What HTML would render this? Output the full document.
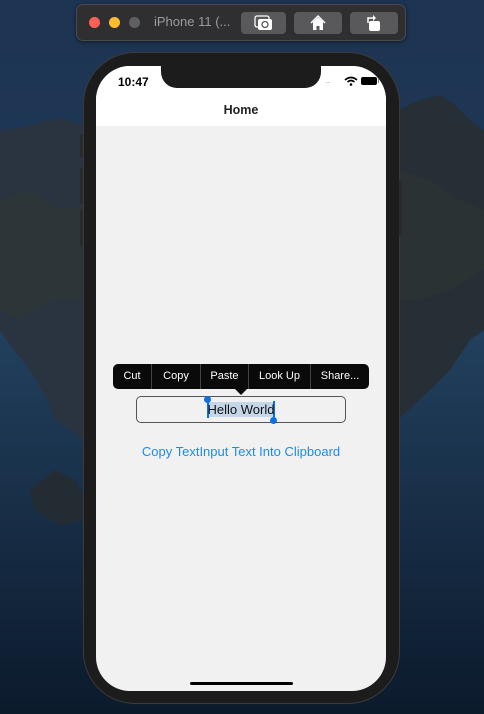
<!DOCTYPE html>
<html><head><meta charset="utf-8"><style>
*{margin:0;padding:0;box-sizing:border-box}
body{width:484px;height:714px;overflow:hidden;position:relative;font-family:"Liberation Sans",sans-serif;background:#1a2c44}
.abs{position:absolute}
</style></head><body>
<svg class="abs" style="left:0;top:0" width="484" height="714">
<defs><linearGradient id="sky" x1="0" y1="0" x2="0" y2="1"><stop offset="0" stop-color="#1d3452"/><stop offset="0.5" stop-color="#1f3a5a"/><stop offset="1" stop-color="#0f1f33"/></linearGradient>
<linearGradient id="sea" x1="0" y1="0" x2="0" y2="1"><stop offset="0" stop-color="#22405e"/><stop offset="1" stop-color="#0c1a2c"/></linearGradient></defs>
<rect width="484" height="714" fill="url(#sky)"/>
<rect y="330" width="484" height="384" fill="url(#sea)"/>
<polygon fill="#2a3340" points="0,130 20,128 40,122 60,118 85,125 85,440 70,430 55,420 45,395 30,370 10,345 0,330"/>
<polygon fill="#2e3836" opacity="0.7" points="0,200 30,190 60,210 85,205 85,300 50,300 20,320 0,310"/>
<polygon fill="#232b33" points="30,490 55,470 75,480 85,500 85,520 60,525 35,510"/>
<polygon fill="#262e36" points="398,110 420,100 440,95 455,105 470,120 484,130 484,330 470,340 450,370 430,390 398,420"/>
<polygon fill="#2c3433" opacity="0.7" points="398,170 430,180 460,200 484,210 484,270 450,290 420,300 398,300"/>
</svg>
<div class="abs" style="left:76px;top:4px;width:330px;height:37px;background:#2f2f31;border:1px solid #4a4a4c;border-radius:7px;box-shadow:0 1px 4px rgba(0,0,0,.5)"></div>
<div class="abs" style="left:89px;top:17px;width:11px;height:11px;border-radius:50%;background:#fe5f57"></div>
<div class="abs" style="left:109px;top:17px;width:11px;height:11px;border-radius:50%;background:#febc2e"></div>
<div class="abs" style="left:129px;top:17px;width:11px;height:11px;border-radius:50%;background:#606062"></div>
<div class="abs" style="left:154px;top:14px;font-size:13px;color:#9c9c9e">iPhone 11 (...</div>
<div class="abs" style="left:241px;top:12px;width:45px;height:22px;border-radius:4px;background:#59595b"></div>
<div class="abs" style="left:294px;top:12px;width:48px;height:22px;border-radius:4px;background:#59595b"></div>
<div class="abs" style="left:350px;top:12px;width:48px;height:22px;border-radius:4px;background:#59595b"></div>
<svg class="abs" style="left:254px;top:14px" width="20" height="18"><rect x="1" y="2" width="14" height="11" rx="2" fill="none" stroke="#fff" stroke-width="1.3"/><rect x="4" y="5" width="14" height="11" rx="2" fill="#fff"/><circle cx="11" cy="10.5" r="3" fill="none" stroke="#59595b" stroke-width="1.3"/></svg>
<svg class="abs" style="left:309px;top:14px" width="18" height="18"><path d="M2 9 L9 2 L16 9" fill="none" stroke="#fff" stroke-width="1.5"/><path d="M4 8 L9 3.5 L14 8 V16 H10.5 V12 H7.5 V16 H4 Z" fill="#fff"/></svg>
<svg class="abs" style="left:365px;top:13px" width="18" height="20"><rect x="4" y="8" width="11" height="10" rx="2" fill="#fff"/><path d="M3 10 V5 H9" fill="none" stroke="#fff" stroke-width="1.5"/><path d="M8 2 L11 5 L8 8 Z" fill="#fff"/></svg>
<div class="abs" style="left:83px;top:52px;width:317px;height:652px;border-radius:52px;background:#1c1c1c;border:1px solid #3a3a3a"></div>
<div class="abs" style="left:80px;top:135px;width:3px;height:22px;background:#2a2a2a"></div>
<div class="abs" style="left:80px;top:168px;width:3px;height:36px;background:#2a2a2a"></div>
<div class="abs" style="left:80px;top:210px;width:3px;height:36px;background:#2a2a2a"></div>
<div class="abs" style="left:399px;top:180px;width:3px;height:56px;background:#2a2a2a"></div>
<div class="abs" style="left:96px;top:66px;width:290px;height:625px;border-radius:34px;background:#f1f1f1;overflow:hidden">
 <div class="abs" style="left:0;top:0;width:290px;height:60px;background:#fff"></div>
 <div class="abs" style="left:65px;top:-2px;width:160px;height:24px;background:#1c1c1c;border-radius:0 0 16px 16px"></div>
 <div class="abs" style="left:22px;top:9px;font-size:12px;font-weight:bold;color:#000">10:47</div>
 <div class="abs" style="left:229px;top:10px;font-size:8px;color:#bbb;letter-spacing:-1px">....</div>
 <svg class="abs" style="left:248px;top:10px" width="14" height="10"><path d="M1 4 Q7 -1 13 4" fill="none" stroke="#000" stroke-width="1.6"/><path d="M3.5 6 Q7 3 10.5 6" fill="none" stroke="#000" stroke-width="1.6"/><circle cx="7" cy="8.5" r="1.3" fill="#000"/></svg>
 <div class="abs" style="left:265px;top:11px;width:16px;height:8px;border-radius:2px;background:#000"></div>
 <div class="abs" style="left:282px;top:13px;width:1px;height:4px;background:#888"></div>
 <div class="abs" style="left:0;top:37px;width:290px;text-align:center;font-size:12.5px;font-weight:bold;color:#222">Home</div>
 <div class="abs" style="left:94px;top:616px;width:103px;height:3px;border-radius:2px;background:#000"></div>
</div>
<div class="abs" style="left:113px;top:364px;width:256px;height:25px;background:#0a0a0a;border-radius:5px;font-size:11px;color:#fff;display:flex;align-items:center">
 <div style="width:39px;text-align:center;border-right:1px solid #444;height:25px;line-height:25px">Cut</div>
 <div style="width:49px;text-align:center;border-right:1px solid #444;height:25px;line-height:25px">Copy</div>
 <div style="width:48px;text-align:center;border-right:1px solid #444;height:25px;line-height:25px">Paste</div>
 <div style="width:62px;text-align:center;border-right:1px solid #444;height:25px;line-height:25px">Look Up</div>
 <div style="width:58px;text-align:center;height:25px;line-height:25px">Share...</div>
</div>
<div class="abs" style="left:235px;top:389px;width:0;height:0;border-left:6px solid transparent;border-right:6px solid transparent;border-top:6px solid #0a0a0a"></div>
<div class="abs" style="left:136px;top:396px;width:210px;height:27px;border:1px solid #555;border-radius:5px"></div>
<div class="abs" style="left:208px;top:402px;width:66px;height:15px;background:#c4d6e8"></div>
<div class="abs" style="left:207px;top:400px;width:2px;height:18px;background:#0a72e0"></div>
<div class="abs" style="left:273px;top:401px;width:2px;height:18px;background:#0a72e0"></div>
<div class="abs" style="left:204px;top:396px;width:7px;height:7px;border-radius:50%;background:#0a72e0"></div>
<div class="abs" style="left:270px;top:417px;width:7px;height:7px;border-radius:50%;background:#0a72e0"></div>
<div class="abs" style="left:136px;top:402px;width:210px;text-align:center;font-size:13px;color:#111">Hello World</div>
<div class="abs" style="left:96px;top:444px;width:290px;text-align:center;font-size:13px;color:#1a8cf0">Copy TextInput Text Into Clipboard</div>
</body></html>
